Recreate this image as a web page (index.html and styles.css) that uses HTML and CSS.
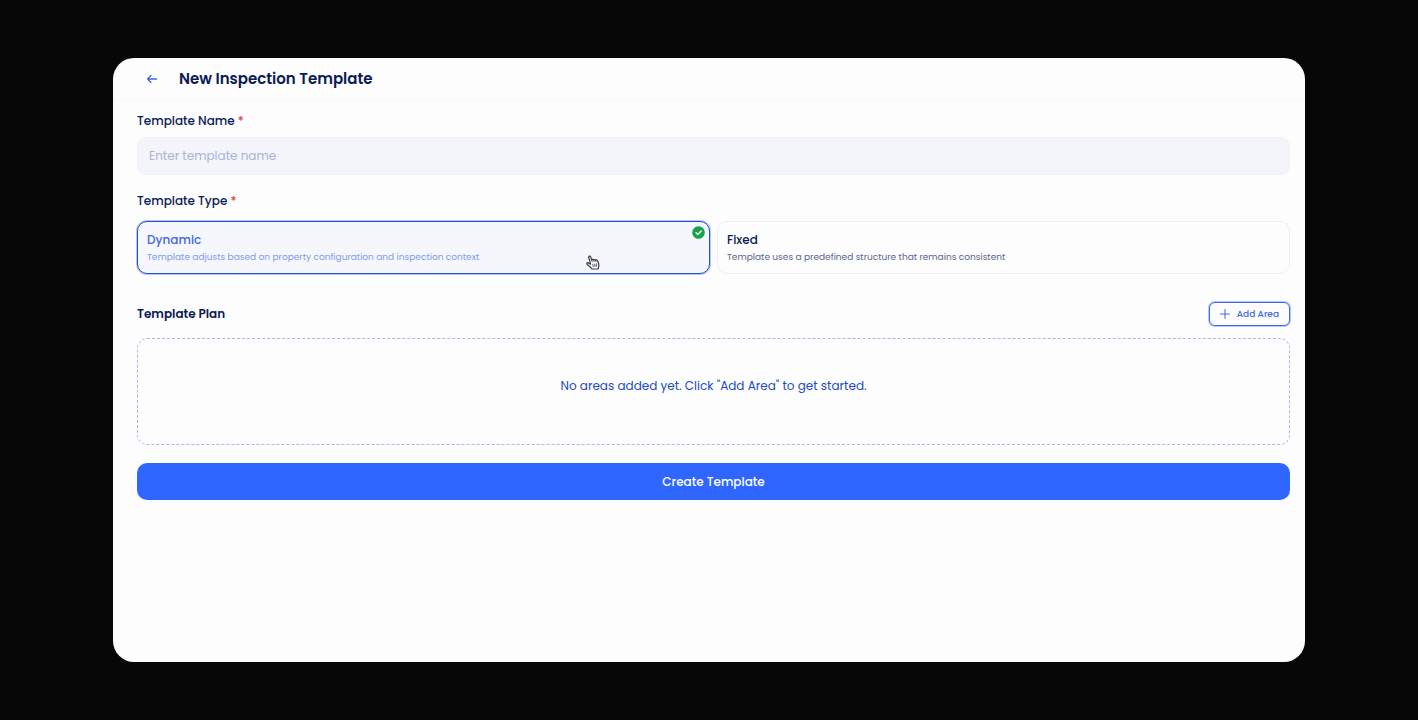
FILE: index.html
```html
<!DOCTYPE html>
<html lang="en">
<head>
    <meta charset="UTF-8">
    <meta name="viewport" content="width=device-width, initial-scale=1.0">
    <title>New Inspection Template</title>
    <link rel="stylesheet" href="styles.css">
</head>
<body>
    <main class="panel">
        <header class="panel-header">
            <button type="button" class="back-button" aria-label="Back">
                <svg width="12" height="12" viewBox="0 0 12 12" fill="none" stroke="currentColor" stroke-width="1.3" stroke-linecap="round" stroke-linejoin="round">
                    <path d="M10.500 6H1.500M5 2.500L1.500 6 5 9.500"/>
                </svg>
            </button>
            <h1>New Inspection Template</h1>
        </header>

        <form class="template-form">
            <label class="field-label" for="templateName">Template Name <span class="required">*</span></label>
            <input type="text" id="templateName" class="text-input" placeholder="Enter template name">

            <fieldset class="type-group">
                <legend class="field-label">Template Type <span class="required">*</span></legend>
                <div class="type-options">
                    <label class="type-card">
                        <input type="radio" name="templateType" value="dynamic" checked>
                        <span class="type-name">Dynamic</span>
                        <span class="type-text">Template adjusts based on property configuration and inspection context</span>
                        <svg class="type-check" width="13" height="13" viewBox="0 0 13 13" fill="none">
                            <circle cx="6.5" cy="6.5" r="6.3" fill="#16a34a"/>
                            <path d="M4 6.7l1.8 1.7L9.2 5" stroke="#fff" stroke-width="1.4" stroke-linecap="round" stroke-linejoin="round"/>
                        </svg>
                        <svg class="pointer" width="14" height="15" viewBox="0 0 14 15" fill="#fff" stroke="#3a3a3f" stroke-width="1.2" stroke-linecap="round" stroke-linejoin="round">
                            <path d="M4.6 9.2L2.8 2.5C2.4 1.1 4.2.5 4.7 1.9l1 3.2c.2-.9 1.6-1 2 0 .4-.8 1.6-.8 2 .2.6-.7 1.7-.4 2 .6l1 3.1c.4 1.5 0 2.8-.5 4.9l-6.2.1c-.6-1.4-2.7-2.9-4.5-4.3C.2 8.6 1 7.3 2.400 7.900z"/>
                            <path d="M5.7 5.1l.5 1.7M7.7 5.2l.5 1.5M9.7 5.4l.4 1.4M6.8 9.2l.4 2.600M8.7 9l.3 2.600M10.5 8.8l.1 2.600" stroke-width=".8"/>
                        </svg>
                    </label>
                    <label class="type-card">
                        <input type="radio" name="templateType" value="fixed">
                        <span class="type-name">Fixed</span>
                        <span class="type-text">Template uses a predefined structure that remains consistent</span>
                    </label>
                </div>
            </fieldset>

            <div class="plan-header">
                <h2>Template Plan</h2>
                <button type="button" class="add-button">
                    <svg width="10" height="10" viewBox="0 0 10 10" fill="none" stroke="currentColor" stroke-width="1" stroke-linecap="round">
                        <path d="M5 .5v9M.5 5h9"/>
                    </svg>
                    Add Area
                </button>
            </div>
            <p class="plan-empty">No areas added yet. Click "Add Area" to get started.</p>

            <button type="submit" class="create-button">Create Template</button>
        </form>
    </main>
</body>
</html>
```
FILE: styles.css
```css
* {
    box-sizing: border-box;
}

body {
    display: flex;
    min-height: 100vh;
    margin: 0;
    padding: 58px 113px;
    background-color: #070707;
    color: #0b1b55;
    font-family: Poppins, Inter, sans-serif;
    font-size: 12px;
    line-height: 20px;
}

button,
input {
    font-family: inherit;
}

button {
    cursor: pointer;
}

.panel {
    flex: 1;
    background-color: #fdfdfd;
    border-radius: 21px;
}

/* Header */
.panel-header {
    display: flex;
    align-items: center;
    gap: 13px;
    padding: 9px 24px;
    border-bottom: 1px solid #f8f8fa;
}

.panel-header h1 {
    margin: 0;
    font-size: 15px;
    font-weight: 600;
    line-height: 24px;
}

.back-button {
    display: flex;
    align-items: center;
    justify-content: center;
    width: 29px;
    height: 24px;
    padding: 0;
    border: none;
    background: none;
    color: #4169e1;
}

/* Form */
.template-form {
    display: flex;
    flex-direction: column;
    padding: 10px 15px 24px 24px;
}

.field-label {
    padding: 0;
    font-weight: 500;
}

.required {
    color: #dc4444;
}

.text-input {
    width: 100%;
    height: 38px;
    margin: 6px 0 16px;
    padding: 0 11px;
    border: 1px solid #eff0f8;
    border-radius: 10px;
    background-color: #f4f5fb;
    color: #0b1b55;
    font-size: 12px;
}

.text-input::placeholder {
    color: #a9b3d3;
}

.type-group {
    min-width: 0;
    margin: 0;
    padding: 0;
    border: none;
}

.type-options {
    display: grid;
    grid-template-columns: 1fr 1fr;
    gap: 7px;
    margin-top: 10px;
}

.type-card {
    position: relative;
    display: flex;
    flex-direction: column;
    padding: 9px 9px 8px;
    border: 1px solid #eceef9;
    border-radius: 10px;
    cursor: pointer;
}

.type-card input {
    position: absolute;
    opacity: 0;
}

.type-name {
    font-weight: 500;
    line-height: 18px;
}

.type-text {
    color: #59658f;
    font-size: 9px;
    line-height: 16px;
}

/* Selected card */
.type-card:has(input:checked) {
    border-color: #2450c8;
    background-color: #f5f7fd;
    box-shadow: 0 0 0 1px #b4c8f8;
}

.type-card:has(input:checked) .type-name {
    color: #4169e1;
}

.type-card:has(input:checked) .type-text {
    color: #7f9bea;
}

.type-check {
    position: absolute;
    top: 4px;
    right: 4px;
}

.pointer {
    position: absolute;
    right: 109px;
    bottom: 3px;
}

/* Plan */
.plan-header {
    display: flex;
    align-items: center;
    justify-content: space-between;
    margin: 28px 0 12px;
}

.plan-header h2 {
    margin: 0;
    font-size: 12px;
    font-weight: 600;
}

.add-button {
    display: flex;
    align-items: center;
    gap: 7px;
    height: 24px;
    padding: 0 10px;
    border: 1px solid #4169e1;
    border-radius: 6px;
    background-color: #fdfdfd;
    box-shadow: 0 0 0 1px #b4c8f8;
    color: #4169e1;
    font-size: 9px;
    font-weight: 500;
}

.plan-empty {
    margin: 0;
    padding: 37px 16px 48px;
    border: 1px dashed #a5b9e9;
    border-radius: 10px;
    color: #1e49c4;
    font-size: 12px;
    text-align: center;
}

.create-button {
    height: 37px;
    margin-top: 18px;
    border: none;
    border-radius: 10px;
    background-color: #2f66ff;
    color: #fff;
    font-size: 12px;
    font-weight: 500;
}
```
